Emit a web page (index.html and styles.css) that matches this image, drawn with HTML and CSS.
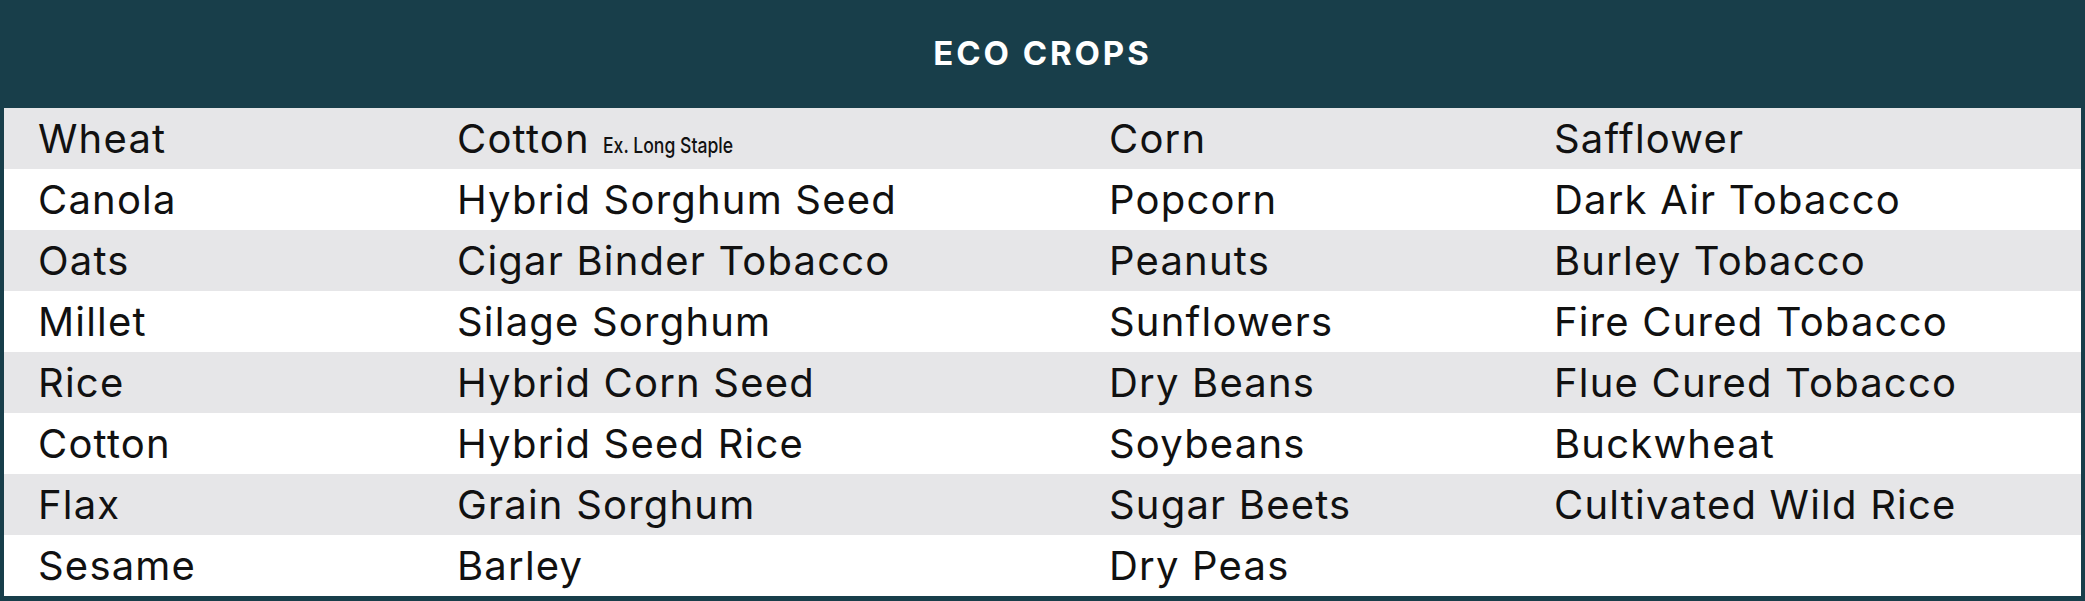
FILE: index.html
```html
<!DOCTYPE html>
<html lang="en">
<head>
<meta charset="utf-8">
<title>Eco Crops</title>
<link rel="stylesheet" href="styles.css">
</head>
<body>
<div class="table">
  <div class="head">ECO CROPS</div>
  <div class="row alt"><span>Wheat</span><span>Cotton <small class="note">Ex. Long Staple</small></span><span>Corn</span><span>Safflower</span></div>
  <div class="row"><span>Canola</span><span>Hybrid Sorghum Seed</span><span>Popcorn</span><span>Dark Air Tobacco</span></div>
  <div class="row alt"><span>Oats</span><span>Cigar Binder Tobacco</span><span>Peanuts</span><span>Burley Tobacco</span></div>
  <div class="row"><span>Millet</span><span>Silage Sorghum</span><span>Sunflowers</span><span>Fire Cured Tobacco</span></div>
  <div class="row alt"><span>Rice</span><span>Hybrid Corn Seed</span><span>Dry Beans</span><span>Flue Cured Tobacco</span></div>
  <div class="row"><span>Cotton</span><span>Hybrid Seed Rice</span><span>Soybeans</span><span>Buckwheat</span></div>
  <div class="row alt"><span>Flax</span><span>Grain Sorghum</span><span>Sugar Beets</span><span>Cultivated Wild Rice</span></div>
  <div class="row"><span>Sesame</span><span>Barley</span><span>Dry Peas</span><span></span></div>
</div>
</body>
</html>
```
FILE: styles.css
```css
html, body {
  margin: 0;
  padding: 0;
  background: #ffffff;
}
.table {
  width: 2085px;
  height: 601px;
  box-sizing: border-box;
  border: 4px solid #183e4a;
  border-bottom-width: 5px;
  display: flex;
  flex-direction: column;
  font-family: Inter, Lato, sans-serif;
  font-variant-ligatures: none;
  color: #111111;
}
.head {
  height: 104px;
  box-sizing: border-box;
  padding-bottom: 6px;
  background: #183e4a;
  color: #ffffff;
  font-weight: 700;
  font-size: 33px;
  letter-spacing: 2.9px;
  display: flex;
  align-items: center;
  justify-content: center;
}
.row {
  height: 61px;
  display: grid;
  grid-template-columns: 419px 652px 445px 1fr;
  align-items: center;
  padding-left: 34px;
  font-size: 40px;
  font-weight: 400;
  letter-spacing: 1.2px;
  background: #ffffff;
  white-space: nowrap;
}
.row.alt {
  background: #e6e6e8;
}
.note {
  font-size: 22px;
  font-weight: 500;
  letter-spacing: 0;
  margin-left: 1px;
  display: inline-block;
  transform: scaleX(0.8);
  transform-origin: left center;
}
```
